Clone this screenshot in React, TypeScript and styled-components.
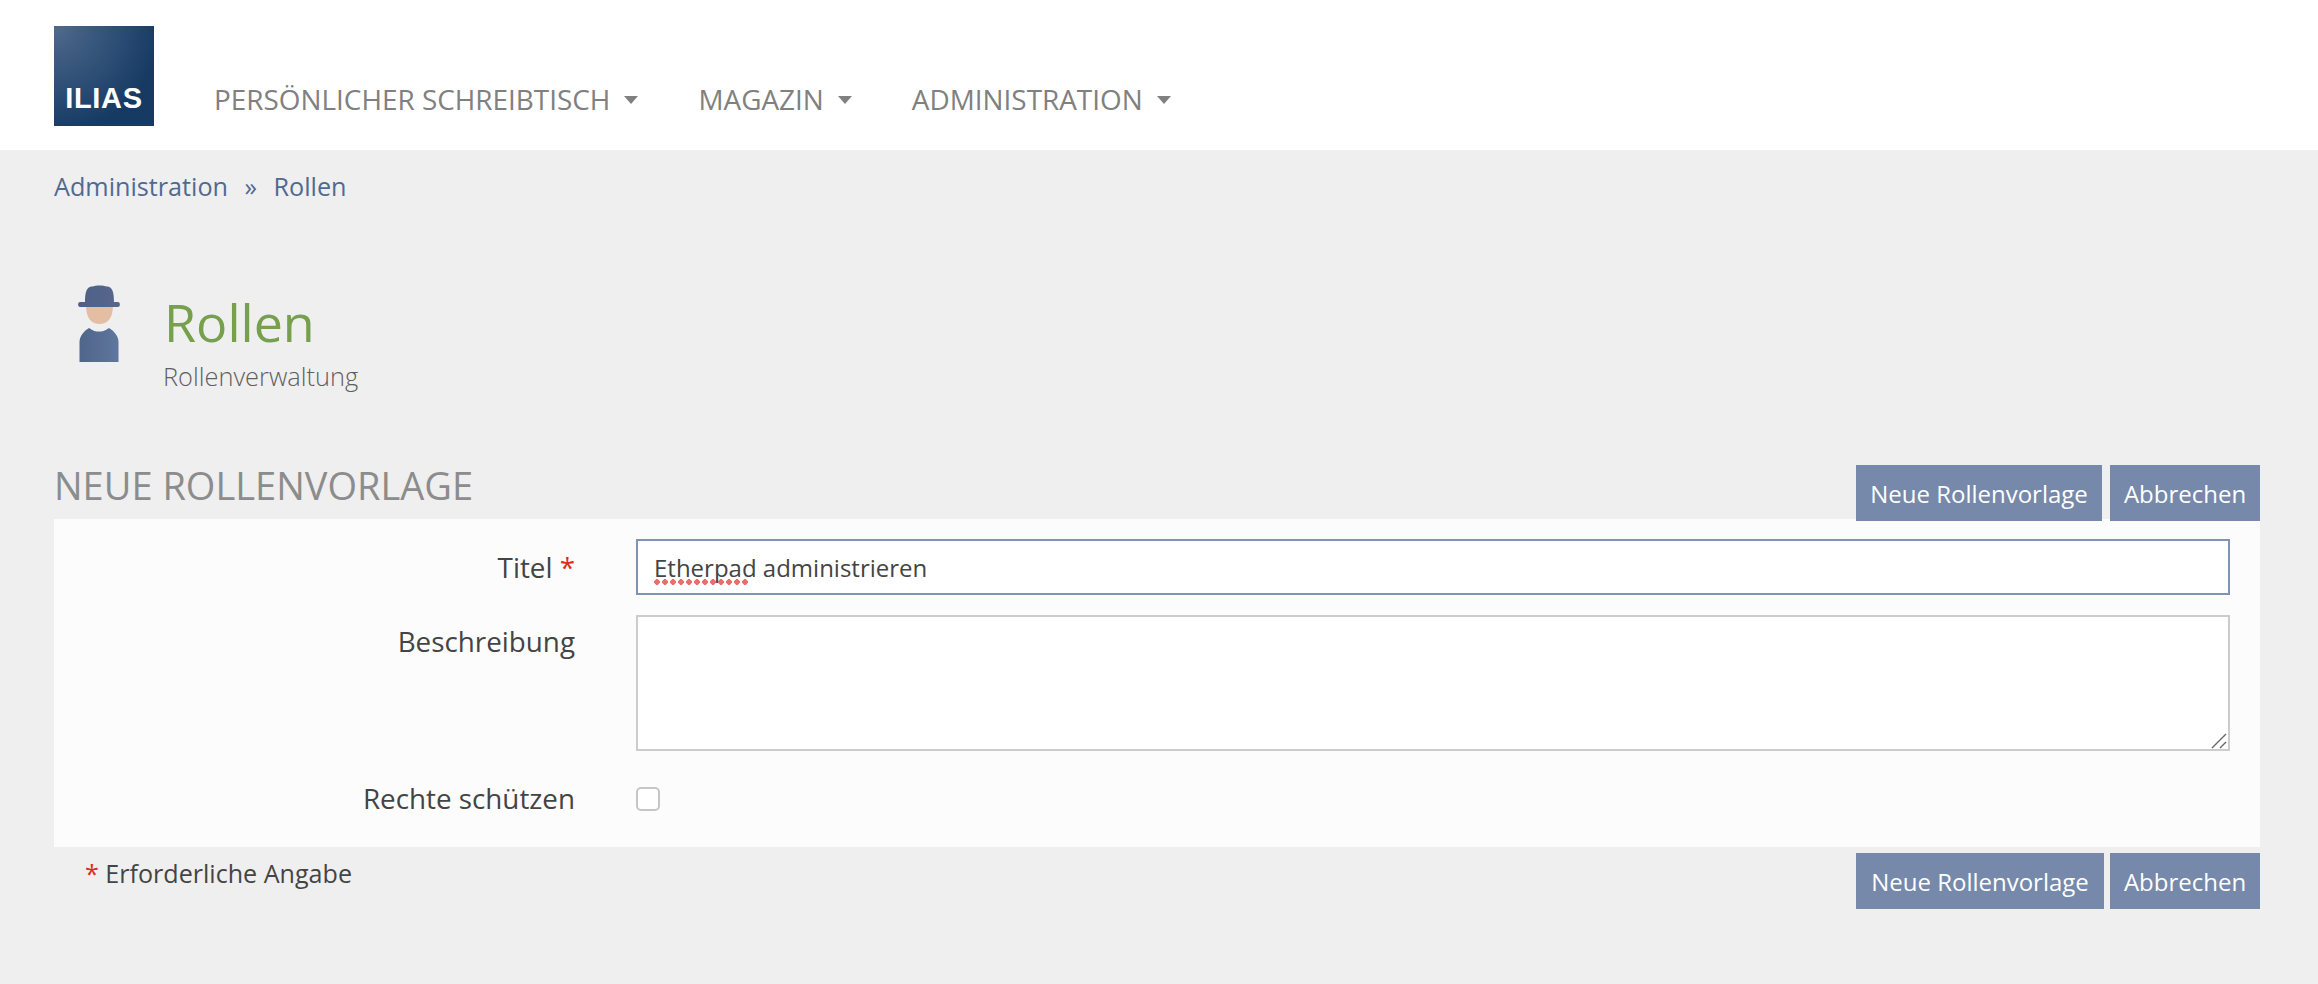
import React from 'react';
import styled, { createGlobalStyle } from 'styled-components';

const GlobalStyle = createGlobalStyle`
  html, body {
    margin: 0;
    padding: 0;
    background: #efefef;
  }
  body {
    font-family: "Open Sans", "Liberation Sans", sans-serif;
    color: #444;
  }
`;

const Page = styled.div`
  min-height: 984px;
  background: #efefef;
`;

const Header = styled.header`
  display: flex;
  align-items: flex-start;
  height: 150px;
  box-sizing: border-box;
  padding: 26px 0 0 54px;
  background: #fff;
`;

const Logo = styled.div`
  display: flex;
  align-items: flex-end;
  justify-content: center;
  width: 100px;
  height: 100px;
  box-sizing: border-box;
  padding-bottom: 11px;
  background: radial-gradient(circle at 0 0, #506a8b 0%, #2d4e75 45%, #173a63 75%);
  color: #fff;
  font: bold 29px/34px "Liberation Sans", sans-serif;
  letter-spacing: 0.7px;
`;

const Nav = styled.nav`
  display: flex;
  gap: 60px;
  margin: 53px 0 0 60px;
`;

const NavItem = styled.a`
  display: flex;
  align-items: center;
  gap: 14px;
  color: #808080;
  font-size: 27.9px;
  line-height: 40px;
  white-space: nowrap;
`;

const Caret = styled.span`
  width: 0;
  height: 0;
  margin-top: 2px;
  border-style: solid;
  border-width: 8px 7.5px 0;
  border-color: #808080 transparent transparent;
`;

const Breadcrumb = styled.div`
  display: flex;
  align-items: center;
  gap: 16.5px;
  height: 72px;
  padding-left: 54px;
  color: #4f6a92;
  font-size: 25.2px;
`;

const TitleArea = styled.div`
  display: flex;
  align-items: flex-start;
  margin-top: 61px;
  padding-left: 78px;
`;

const RoleIcon = styled.svg`
  flex: none;
  width: 42px;
  height: 78px;
  margin-top: 2px;
`;

const TitleText = styled.div`
  margin-left: 44px;
  padding-top: 4px;
`;

const Title = styled.h1`
  margin: 0 0 2px;
  color: #76a04c;
  font-size: 52px;
  font-weight: 400;
  line-height: 70px;
`;

const Subtitle = styled.div`
  margin: 0 0 0 -1px;
  color: #5f5f5f;
  font-size: 25.4px;
  font-weight: 300;
  line-height: 34px;
`;

const SectionHead = styled.div`
  display: flex;
  align-items: flex-end;
  justify-content: space-between;
  margin: 67px 58px -2px 54px;
  position: relative;
`;

const SectionTitle = styled.h2`
  margin: 0 0 11px;
  color: #8c8c8c;
  font-size: 38px;
  font-weight: 400;
  line-height: 50px;
`;

const Buttons = styled.div<{ $gap: number }>`
  display: flex;
  gap: ${(p) => p.$gap}px;
`;

const Button = styled.button<{ $width: number }>`
  width: ${(p) => p.$width}px;
  height: 56px;
  padding: 0;
  border: 0;
  background: #7689aa;
  color: #fff;
  font-family: inherit;
  font-size: 24px;
  white-space: nowrap;
`;

const Panel = styled.form`
  display: flex;
  flex-direction: column;
  gap: 20px;
  margin: 0 58px 0 54px;
  padding: 20px 30px 0 0;
  height: 328px;
  box-sizing: border-box;
  background: #fcfcfc;
`;

const Row = styled.div`
  display: grid;
  grid-template-columns: 521px 1fr;
  column-gap: 61px;
`;

const Label = styled.label<{ $top: number }>`
  padding-top: ${(p) => p.$top}px;
  color: #444;
  font-size: 27.8px;
  line-height: 38px;
  text-align: right;
  white-space: nowrap;
`;

const Required = styled.span`
  color: #e02a20;
`;

const Field = styled.div`
  position: relative;
`;

const TextInput = styled.input`
  display: block;
  width: 100%;
  height: 56px;
  box-sizing: border-box;
  padding: 0 16px;
  border: 2px solid #8093b3;
  outline: 0;
  background: #fff;
  color: #444;
  font-family: inherit;
  font-size: 24px;
`;

const SpellMark = styled.span`
  position: absolute;
  left: 17px;
  top: 40px;
  width: 96px;
  height: 6px;
  background: radial-gradient(circle at 4px 3px, #ea6f6a 2.6px, transparent 3px) 0 0 / 8px 6px repeat-x;
`;

const TextArea = styled.textarea`
  display: block;
  width: 100%;
  height: 136px;
  box-sizing: border-box;
  border: 2px solid #ccc;
  outline: 0;
  background: #fff;
  resize: none;
`;

const ResizeGrip = styled.svg`
  position: absolute;
  right: 3px;
  bottom: 2px;
  width: 16px;
  height: 16px;
`;

const Check = styled.span`
  display: block;
  width: 24px;
  height: 24px;
  margin-top: 16px;
  box-sizing: border-box;
  border: 2px solid #c6c6c6;
  border-radius: 5px;
  background: #fff;
`;

const Footer = styled.div`
  display: flex;
  align-items: flex-start;
  justify-content: space-between;
  margin: 6px 58px 0 54px;
`;

const RequiredNote = styled.div`
  margin: 3px 0 0 31px;
  color: #444;
  font-size: 25.1px;
  line-height: 34px;
`;

const PersonIcon = () => (
  <RoleIcon viewBox="0 0 42 78" aria-hidden="true">
    <defs>
      <linearGradient id="hat" x1="0" x2="1" y1="0" y2="0">
        <stop offset="0" stopColor="#4e6086" />
        <stop offset="1" stopColor="#57678e" />
      </linearGradient>
      <linearGradient id="coat" x1="0" x2="1" y1="0" y2="0">
        <stop offset="0" stopColor="#4f6589" />
        <stop offset="1" stopColor="#5f769e" />
      </linearGradient>
    </defs>
    <path d="M8 20 C8 34 14 39 21.5 39 C29 39 35 34 35 20 Z" fill="#e4bea2" />
    <path d="M7 17 C7 6 9 2 14 1.5 C18 0 25 0 29 1.5 C34 2 36 6 36 17 L40 17 C42.5 17 42.5 22 40 22 L2 22 C-0.5 22 -0.5 17 2 17 Z" fill="url(#hat)" />
    <path d="M1.5 77 L1.5 57 C1.5 51 6 46 11 43 C15 46 18 46.5 21 46.5 C24 46.5 27 46 31 43 C36 46 40.5 51 40.5 57 L40.5 77 Z" fill="url(#coat)" />
  </RoleIcon>
);

const App = () => {
  return (
    <Page>
      <GlobalStyle />
      <Header>
        <Logo>ILIAS</Logo>
        <Nav>
          <NavItem>PERSÖNLICHER SCHREIBTISCH<Caret /></NavItem>
          <NavItem>MAGAZIN<Caret /></NavItem>
          <NavItem>ADMINISTRATION<Caret /></NavItem>
        </Nav>
      </Header>
      <Breadcrumb>
        <span>Administration</span>
        <span>»</span>
        <span>Rollen</span>
      </Breadcrumb>
      <TitleArea>
        <PersonIcon />
        <TitleText>
          <Title>Rollen</Title>
          <Subtitle>Rollenverwaltung</Subtitle>
        </TitleText>
      </TitleArea>
      <SectionHead>
        <SectionTitle>NEUE ROLLENVORLAGE</SectionTitle>
        <Buttons $gap={8}>
          <Button type="button" $width={246}>Neue Rollenvorlage</Button>
          <Button type="button" $width={150}>Abbrechen</Button>
        </Buttons>
      </SectionHead>
      <Panel>
        <Row>
          <Label $top={9}>Titel <Required>*</Required></Label>
          <Field>
            <TextInput defaultValue="Etherpad administrieren" spellCheck={false} />
            <SpellMark />
          </Field>
        </Row>
        <Row>
          <Label $top={7}>Beschreibung</Label>
          <Field>
            <TextArea spellCheck={false} />
            <ResizeGrip viewBox="0 0 16 16" aria-hidden="true">
              <path d="M1 15 L15 1 M9 15 L15 9" stroke="#666" strokeWidth="1.4" fill="none" />
            </ResizeGrip>
          </Field>
        </Row>
        <Row>
          <Label $top={8}>Rechte schützen</Label>
          <Field>
            <Check />
          </Field>
        </Row>
      </Panel>
      <Footer>
        <RequiredNote><Required>*</Required> Erforderliche Angabe</RequiredNote>
        <Buttons $gap={6}>
          <Button type="button" $width={248}>Neue Rollenvorlage</Button>
          <Button type="button" $width={150}>Abbrechen</Button>
        </Buttons>
      </Footer>
    </Page>
  );
};

export default App;
